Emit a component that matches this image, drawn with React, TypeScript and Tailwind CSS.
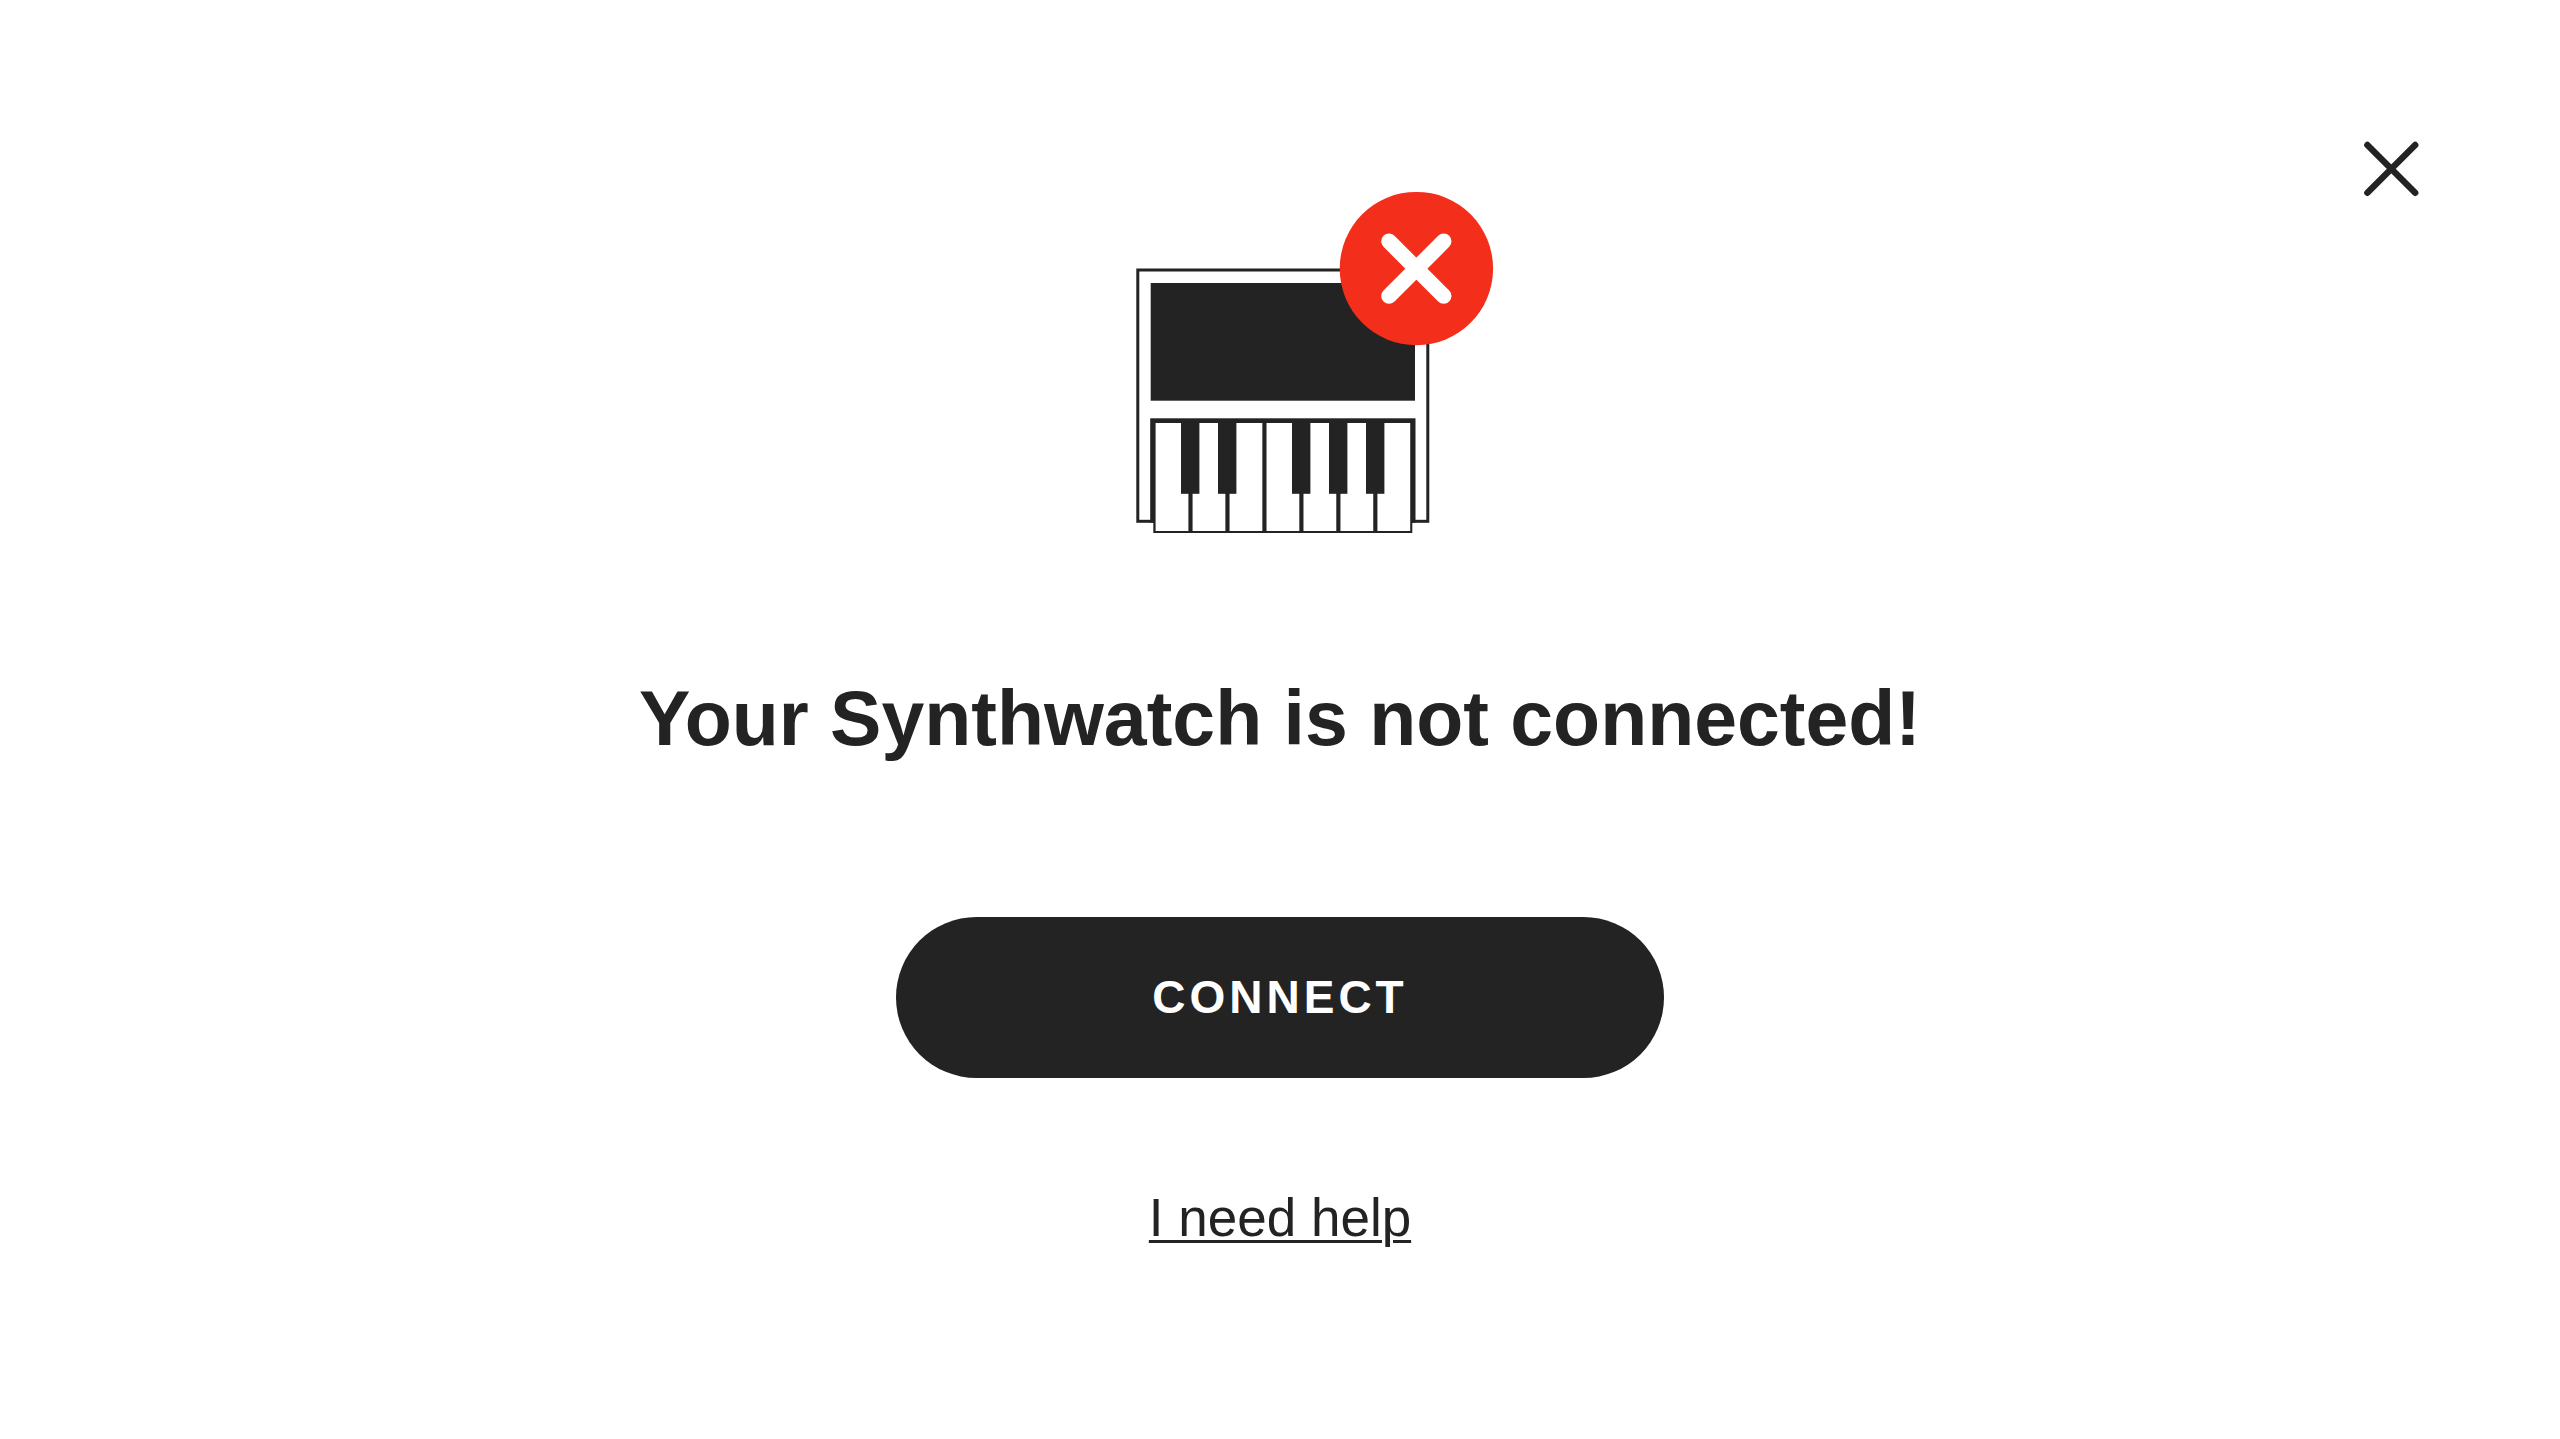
import React from 'react';

interface CloseButtonProps {
  onClick?: () => void;
}

// x position of each black key on the keyboard
const BLACK_KEYS = [121, 158, 232, 269, 306];
const WHITE_KEYS = [0, 1, 2, 3, 4, 5, 6];

const SynthwatchIcon: React.FC = () => (
  <svg className="w-[440px] h-[350px]" viewBox="0 0 440 350" aria-hidden="true">
    <rect x="77.8" y="80" width="290" height="251.3" fill="#ffffff" stroke="#232323" strokeWidth="3" />
    <rect x="90.7" y="93" width="264.3" height="117.7" fill="#232323" />
    <rect x="90.2" y="228.3" width="265.3" height="104.4" fill="#232323" />
    <rect x="93.3" y="240" width="259" height="103" fill="#232323" />
    {WHITE_KEYS.map((i) => (
      <rect key={i} x={95.6 + i * 36.97} y="233" width="32.8" height="108" fill="#ffffff" />
    ))}
    {BLACK_KEYS.map((x) => (
      <rect key={x} x={x} y="230" width="18.4" height="73.8" fill="#232323" />
    ))}
    <circle cx="356.4" cy="78.6" r="76.7" fill="#f32e1a" />
    <path
      d="M329 51.3 383.7 106M383.7 51.3 329 106"
      stroke="#ffffff"
      strokeWidth="15.6"
      strokeLinecap="round"
    />
  </svg>
);

const CloseButton: React.FC<CloseButtonProps> = ({ onClick }) => (
  <button type="button" aria-label="Close" onClick={onClick} className="w-[58px] h-[58px] cursor-pointer">
    <svg className="w-full h-full" viewBox="0 0 58 58" aria-hidden="true">
      <path d="M5.4 5 53.2 52.8M53.2 5 5.4 52.8" stroke="#232323" strokeWidth="6.4" strokeLinecap="round" />
    </svg>
  </button>
);

const App: React.FC = () => {
  return (
    <main className="min-h-screen bg-white text-[#232323] font-['Liberation_Sans',Arial,sans-serif]">
      <div className="grid grid-cols-[1fr_auto_1fr] px-[140px] pt-[140px]">
        <div className="col-start-2 pt-[50px]">
          <SynthwatchIcon />
        </div>
        <div className="justify-self-end">
          <CloseButton />
        </div>
      </div>

      <div className="flex flex-col items-center">
        <h1 className="mt-[130px] text-[77px] leading-[96px] font-bold text-center">
          Your Synthwatch is not connected!
        </h1>
        <button
          type="button"
          className="mt-[151px] w-[768px] h-[161px] rounded-full bg-[#232323] text-white text-[46px] font-bold tracking-[4px] cursor-pointer"
        >
          CONNECT
        </button>
        <a
          href="#help"
          className="mt-[108px] text-[53px] leading-[64px] underline decoration-[3px] underline-offset-[4px]"
        >
          I need help
        </a>
      </div>
    </main>
  );
};

export default App;
